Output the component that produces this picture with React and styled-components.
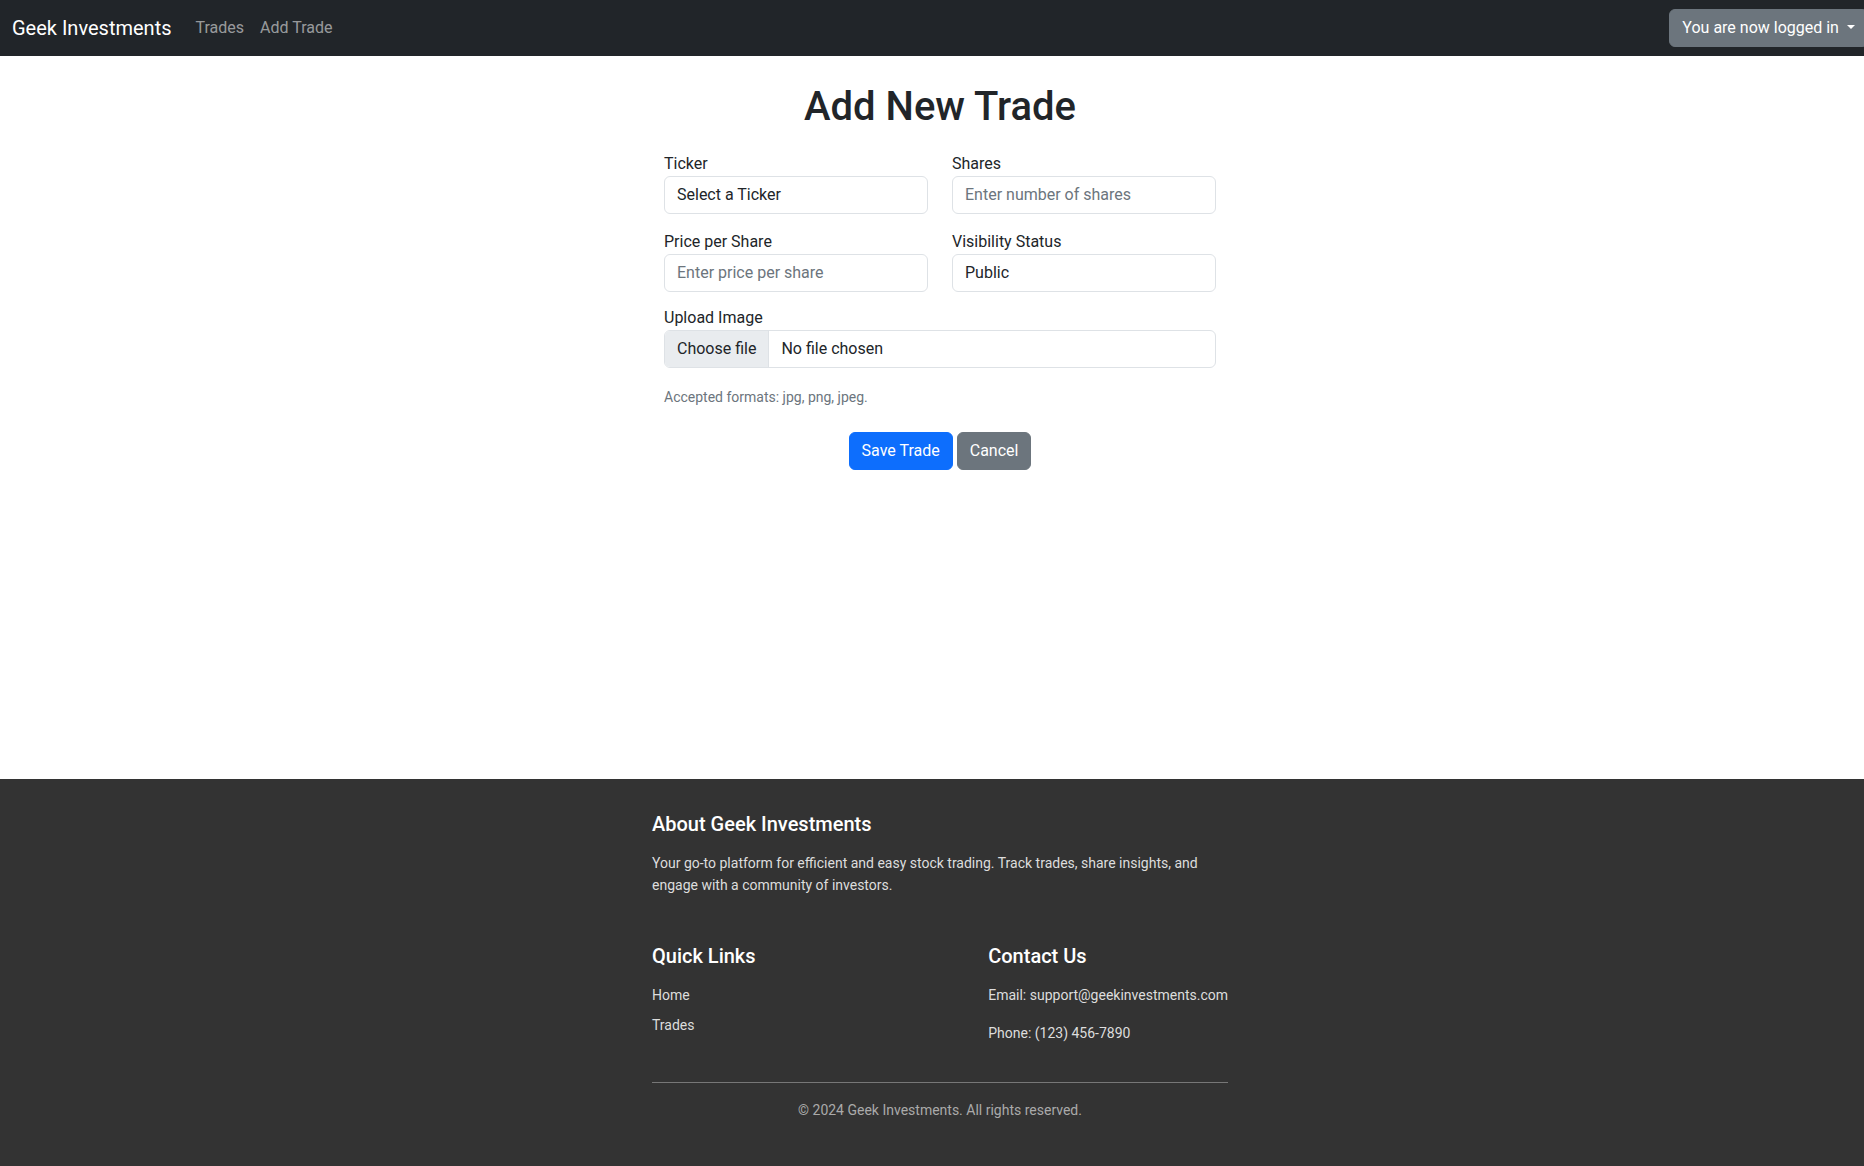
import React from "react";
import styled, { createGlobalStyle } from "styled-components";

const GlobalStyle = createGlobalStyle`
  html, body {
    margin: 0;
    overflow: hidden;
  }
  body {
    font-family: Roboto, "Noto Sans", "Liberation Sans", sans-serif;
    font-size: 16px;
    line-height: 1.5;
    color: #212529;
    background: #fff;
  }
  *, *::before, *::after {
    box-sizing: border-box;
  }
`;

const Page = styled.div`
  width: 1880px;
  min-height: 100vh;
  display: flex;
  flex-direction: column;
`;

const Navbar = styled.nav`
  background: #212529;
  height: 56px;
  padding: 8px 12px;
  display: flex;
  align-items: center;
  justify-content: space-between;
`;

const NavLeft = styled.div`
  display: flex;
  align-items: center;
`;

const Brand = styled.a`
  color: #fff;
  font-size: 20px;
  line-height: 30px;
  padding: 5px 0;
  margin-right: 16px;
  text-decoration: none;
`;

const NavLink = styled.a`
  color: rgba(255, 255, 255, 0.55);
  padding: 8px;
  text-decoration: none;
`;

const Button = styled.button`
  font-family: inherit;
  font-size: 16px;
  line-height: 24px;
  padding: 6px 12px;
  border: 1px solid ${(p) => (p.$variant === "primary" ? "#0d6efd" : "#6c757d")};
  border-radius: 6px;
  color: #fff;
  background: ${(p) => (p.$variant === "primary" ? "#0d6efd" : "#6c757d")};
  cursor: pointer;
`;

const Caret = styled.span`
  display: inline-block;
  margin-left: 0.255em;
  vertical-align: 0.255em;
  border-top: 0.3em solid;
  border-right: 0.3em solid transparent;
  border-left: 0.3em solid transparent;
`;

const Main = styled.main`
  flex: 1;
`;

const Container = styled.div`
  max-width: 600px;
  margin: 0 auto;
  padding: 0 12px;
`;

const Title = styled.h1`
  font-size: 40px;
  font-weight: 500;
  line-height: 1.2;
  text-align: center;
  margin: 27px 0 21px;
`;

const Form = styled.form`
  padding: 0 12px;
`;

const Grid = styled.div`
  display: grid;
  grid-template-columns: 1fr 1fr;
  column-gap: 24px;
`;

const Group = styled.div`
  margin-bottom: ${(p) => p.$mb ?? 16}px;
`;

const Label = styled.label`
  display: block;
`;

const fieldBase = `
  display: block;
  width: 100%;
  font-family: inherit;
  font-size: 16px;
  line-height: 24px;
  padding: 6px 12px;
  color: #212529;
  background: #fff;
  border: 1px solid #dee2e6;
  border-radius: 6px;
  outline: none;
`;

const Input = styled.input`
  ${fieldBase}
  &::placeholder {
    color: #6c757d;
  }
`;

const Select = styled.select`
  ${fieldBase}
  appearance: none;
  height: 38px;
`;

const FilePicker = styled.label`
  ${fieldBase}
  display: flex;
  padding: 0;
  overflow: hidden;
  cursor: pointer;
  input {
    display: none;
  }
`;

const FileButton = styled.span`
  padding: 6px 12px;
  background: #e9ecef;
  border-right: 1px solid #dee2e6;
`;

const FileName = styled.span`
  padding: 6px 12px;
`;

const Hint = styled.div`
  font-size: 14px;
  line-height: 21px;
  color: #6c757d;
  margin-top: 19px;
`;

const Actions = styled.div`
  display: flex;
  justify-content: center;
  gap: 4px;
  margin-top: 24px;
`;

const Footer = styled.footer`
  background: #333;
  color: #ddd;
  padding: 33px 0 45px;
  font-size: 14px;
  line-height: 1.6;
`;

const FooterTitle = styled.h5`
  color: #fff;
  font-size: 20px;
  font-weight: 500;
  line-height: 1.2;
  margin: 0 0 16px;
`;

const About = styled.section`
  margin-bottom: 47px;
`;

const Text = styled.p`
  margin: 0 0 ${(p) => p.$mb || 0}px;
`;

const Columns = styled.div`
  display: flex;
  justify-content: space-between;
`;

const LinkList = styled.ul`
  list-style: none;
  margin: 0;
  padding: 0;
  li {
    margin-bottom: 8px;
  }
  a {
    color: #ddd;
    text-decoration: none;
  }
`;

const Rule = styled.hr`
  border: 0;
  border-top: 1px solid #777;
  margin: 21px 0 16px;
`;

const Copyright = styled.p`
  margin: 0;
  text-align: center;
  color: #aaa;
`;

export default function App() {
  return (
    <>
      <GlobalStyle />
      <Page>
        <Navbar>
          <NavLeft>
            <Brand href="#">Geek Investments</Brand>
            <NavLink href="#">Trades</NavLink>
            <NavLink href="#">Add Trade</NavLink>
          </NavLeft>
          <Button $variant="secondary">
            You are now logged in <Caret />
          </Button>
        </Navbar>

        <Main>
          <Container>
            <Title>Add New Trade</Title>
            <Form onSubmit={(e) => e.preventDefault()}>
              <Grid>
                <Group>
                  <Label htmlFor="ticker">Ticker</Label>
                  <Select id="ticker" defaultValue="">
                    <option value="">Select a Ticker</option>
                  </Select>
                </Group>
                <Group>
                  <Label htmlFor="shares">Shares</Label>
                  <Input id="shares" type="number" placeholder="Enter number of shares" />
                </Group>
                <Group $mb={14}>
                  <Label htmlFor="price">Price per Share</Label>
                  <Input id="price" type="number" placeholder="Enter price per share" />
                </Group>
                <Group $mb={14}>
                  <Label htmlFor="visibility">Visibility Status</Label>
                  <Select id="visibility" defaultValue="public">
                    <option value="public">Public</option>
                    <option value="private">Private</option>
                  </Select>
                </Group>
              </Grid>
              <Group $mb={0}>
                <Label htmlFor="image">Upload Image</Label>
                <FilePicker>
                  <input id="image" type="file" accept=".jpg,.png,.jpeg" />
                  <FileButton>Choose file</FileButton>
                  <FileName>No file chosen</FileName>
                </FilePicker>
              </Group>
              <Hint>Accepted formats: jpg, png, jpeg.</Hint>
              <Actions>
                <Button $variant="primary" type="submit">Save Trade</Button>
                <Button $variant="secondary" type="button">Cancel</Button>
              </Actions>
            </Form>
          </Container>
        </Main>

        <Footer>
          <Container>
            <About>
              <FooterTitle>About Geek Investments</FooterTitle>
              <Text>
                Your go-to platform for efficient and easy stock trading. Track trades, share insights, and
                engage with a community of investors.
              </Text>
            </About>
            <Columns>
              <div>
                <FooterTitle>Quick Links</FooterTitle>
                <LinkList>
                  <li><a href="#">Home</a></li>
                  <li><a href="#">Trades</a></li>
                </LinkList>
              </div>
              <div>
                <FooterTitle>Contact Us</FooterTitle>
                <Text $mb={16}>Email: support@geekinvestments.com</Text>
                <Text $mb={16}>Phone: (123) 456-7890</Text>
              </div>
            </Columns>
            <Rule />
            <Copyright>© 2024 Geek Investments. All rights reserved.</Copyright>
          </Container>
        </Footer>
      </Page>
    </>
  );
}
